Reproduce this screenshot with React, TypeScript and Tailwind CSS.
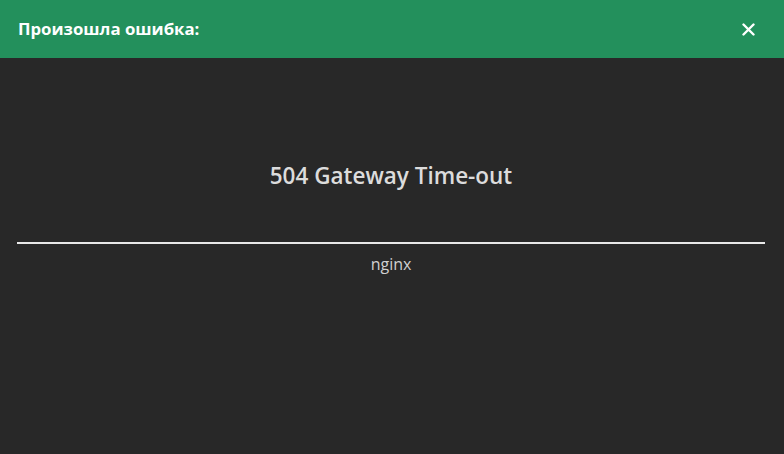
export default function App() {
  return (
    <div className="w-[784px] h-[454px] bg-[#282828] flex flex-col font-['Open_Sans',sans-serif]">
      <div className="h-[58px] bg-[#23905c] flex items-center justify-between pl-[18px] pr-[29px] shrink-0">
        <span className="text-white font-bold text-[16.8px]">Произошла ошибка:</span>
        <svg width="13" height="13" viewBox="0 0 13 13" className="text-white">
          <path d="M1.5 1.5l10 10M11.5 1.5l-10 10" stroke="currentColor" strokeWidth="2.4" strokeLinecap="round" />
        </svg>
      </div>
      <div className="pl-[17px] pr-[19px] pt-[100px] flex flex-col items-center">
        <h1 className="text-[#dcdcdc] font-semibold text-[22.5px] leading-[36px]">504 Gateway Time-out</h1>
        <div className="w-full h-[2px] bg-[#e8e8e8] mt-[48px]" />
        <p className="text-[#d0d0d0] text-[16px] leading-[22px] mt-[9px]">nginx</p>
      </div>
    </div>
  );
}
